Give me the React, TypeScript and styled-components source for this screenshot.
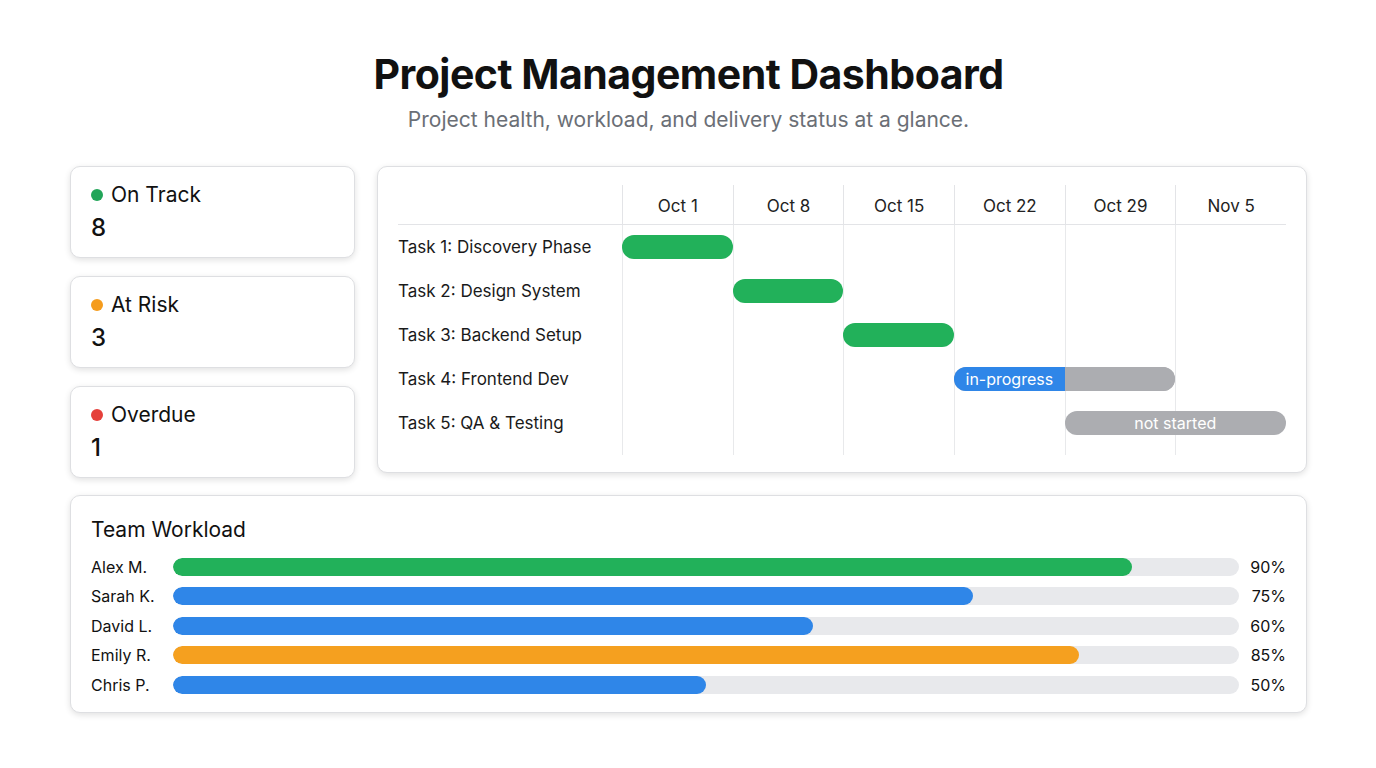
import React from "react";
import styled, { createGlobalStyle } from "styled-components";

const Global = createGlobalStyle`
  html, body { margin: 0; padding: 0; background: #ffffff; }
  body { font-family: Inter, "Noto Sans", sans-serif; color: #111; }
`;

const Page = styled.div`
  width: 1376px; height: 768px; box-sizing: border-box;
  padding: 48px 69px 0 70px;
  display: flex; flex-direction: column;
`;
const Header = styled.header`
  display: flex; flex-direction: column; align-items: center; gap: 6px; margin-bottom: 32px;
`;
const Title = styled.h1`
  margin: 0; font-size: 41px; font-weight: 700; letter-spacing: -0.5px; line-height: 52px; color: #111;
`;
const Subtitle = styled.p`
  margin: 0; font-size: 21px; color: #6b6f76; line-height: 28px;
`;
const TopRow = styled.div`
  display: flex; gap: 22px; height: 307px;
`;
const StatusCol = styled.div`
  width: 285px; display: flex; flex-direction: column; gap: 18px;
`;
const Card = styled.div`
  background: #fff; border: 1px solid #dedfe2; border-radius: 10px;
  box-shadow: 0 2px 6px rgba(0,0,0,0.12);
  box-sizing: border-box;
`;
const StatCard = styled(Card)`
  flex: 1; padding: 14px 20px; display: flex; flex-direction: column; gap: 4px;
`;
const StatLabel = styled.div`
  display: flex; align-items: center; gap: 8px; font-size: 21px; line-height: 28px;
`;
const Dot = styled.span<{ $c: string }>`
  width: 12px; height: 12px; border-radius: 50%; background: ${p => p.$c};
`;
const StatValue = styled.div`
  font-size: 24px; font-weight: 500; line-height: 30px;
`;
const GanttCard = styled(Card)`
  flex: 1; padding: 18px 20px 18px 20px;
  display: grid; grid-template-columns: 224px repeat(6, 1fr);
  grid-template-rows: 40px repeat(5, 44px) 10px;
  position: relative;
`;
const HeadCell = styled.div<{ $first?: boolean }>`
  border-bottom: 1px solid #e3e4e7;
  ${p => !p.$first && "border-left: 1px solid #e3e4e7;"}
  display: flex; align-items: center; justify-content: center; font-size: 17px; color: #222;
  padding-top: 2px;
`;
const TaskLabel = styled.div`
  display: flex; align-items: center; font-size: 17px; color: #1a1a1a;
`;
const Cell = styled.div`
  border-left: 1px solid #e8e9eb;
`;
const BarWrap = styled.div<{ $start: number; $span: number }>`
  grid-column: ${p => p.$start} / span ${p => p.$span};
  align-self: center; height: 24px; position: relative; z-index: 1;
`;
const Bar = styled.div<{ $c: string }>`
  height: 24px; border-radius: 12px; background: ${p => p.$c};
  display: flex; overflow: hidden; color: #fff; font-size: 16px;
`;
const Seg = styled.div<{ $c: string }>`
  flex: 1; background: ${p => p.$c}; display: flex; align-items: center; justify-content: center;
`;
const Workload = styled(Card)`
  margin-top: 22px; height: 218px; padding: 20px 20px 0 20px;
  display: flex; flex-direction: column;
`;
const WTitle = styled.div`
  font-size: 21px; line-height: 28px; margin-bottom: 8px;
`;
const WRow = styled.div`
  display: grid; grid-template-columns: 82px 1fr 47px; align-items: center; height: 29.5px;
  font-size: 16px;
`;
const Track = styled.div`
  height: 18px; border-radius: 9px; background: #e8e9ec; overflow: hidden;
`;
const Fill = styled.div<{ $c: string }>`
  height: 100%; border-radius: 9px; background: ${p => p.$c};
`;
const Pct = styled.div`
  text-align: right;
`;

const GREEN = "#22b15a", BLUE = "#2f86e8", GRAY = "#acadb1", ORANGE = "#f5a01f";
const dates = ["Oct 1", "Oct 8", "Oct 15", "Oct 22", "Oct 29", "Nov 5"];
const tasks = ["Task 1: Discovery Phase", "Task 2: Design System", "Task 3: Backend Setup", "Task 4: Frontend Dev", "Task 5: QA & Testing"];
const people: [string, number, string][] = [
  ["Alex M.", 90, GREEN], ["Sarah K.", 75, BLUE], ["David L.", 60, BLUE], ["Emily R.", 85, ORANGE], ["Chris P.", 50, BLUE],
];

export default function App() {
  return (
    <Page>
      <Global />
      <Header>
        <Title>Project Management Dashboard</Title>
        <Subtitle>Project health, workload, and delivery status at a glance.</Subtitle>
      </Header>
      <TopRow>
        <StatusCol>
          <StatCard><StatLabel><Dot $c="#22a559" />On Track</StatLabel><StatValue>8</StatValue></StatCard>
          <StatCard><StatLabel><Dot $c="#f59c1d" />At Risk</StatLabel><StatValue>3</StatValue></StatCard>
          <StatCard><StatLabel><Dot $c="#e5403a" />Overdue</StatLabel><StatValue>1</StatValue></StatCard>
        </StatusCol>
        <GanttCard>
          <HeadCell $first />
          {dates.map(d => <HeadCell key={d}>{d}</HeadCell>)}
          {tasks.map((t, r) => (
            <React.Fragment key={t}>
              <TaskLabel style={{ gridRow: r + 2, gridColumn: 1 }}>{t}</TaskLabel>
              {dates.map((d, c) => <Cell key={d} style={{ gridRow: r + 2, gridColumn: c + 2 }} />)}
            </React.Fragment>
          ))}
          {dates.map((d, c) => <Cell key={"e" + d} style={{ gridRow: 7, gridColumn: c + 2 }} />)}
          <BarWrap $start={2} $span={1} style={{ gridRow: 2 }}><Bar $c={GREEN} /></BarWrap>
          <BarWrap $start={3} $span={1} style={{ gridRow: 3 }}><Bar $c={GREEN} /></BarWrap>
          <BarWrap $start={4} $span={1} style={{ gridRow: 4 }}><Bar $c={GREEN} /></BarWrap>
          <BarWrap $start={5} $span={2} style={{ gridRow: 5 }}>
            <Bar $c={GRAY}><Seg $c={BLUE}>in-progress</Seg><Seg $c={GRAY} /></Bar>
          </BarWrap>
          <BarWrap $start={6} $span={2} style={{ gridRow: 6 }}>
            <Bar $c={GRAY}><Seg $c={GRAY}>not started</Seg></Bar>
          </BarWrap>
        </GanttCard>
      </TopRow>
      <Workload>
        <WTitle>Team Workload</WTitle>
        {people.map(([n, v, c]) => (
          <WRow key={n}>
            <div>{n}</div>
            <Track><Fill $c={c} style={{ width: `${v}%` }} /></Track>
            <Pct>{v}%</Pct>
          </WRow>
        ))}
      </Workload>
    </Page>
  );
}
